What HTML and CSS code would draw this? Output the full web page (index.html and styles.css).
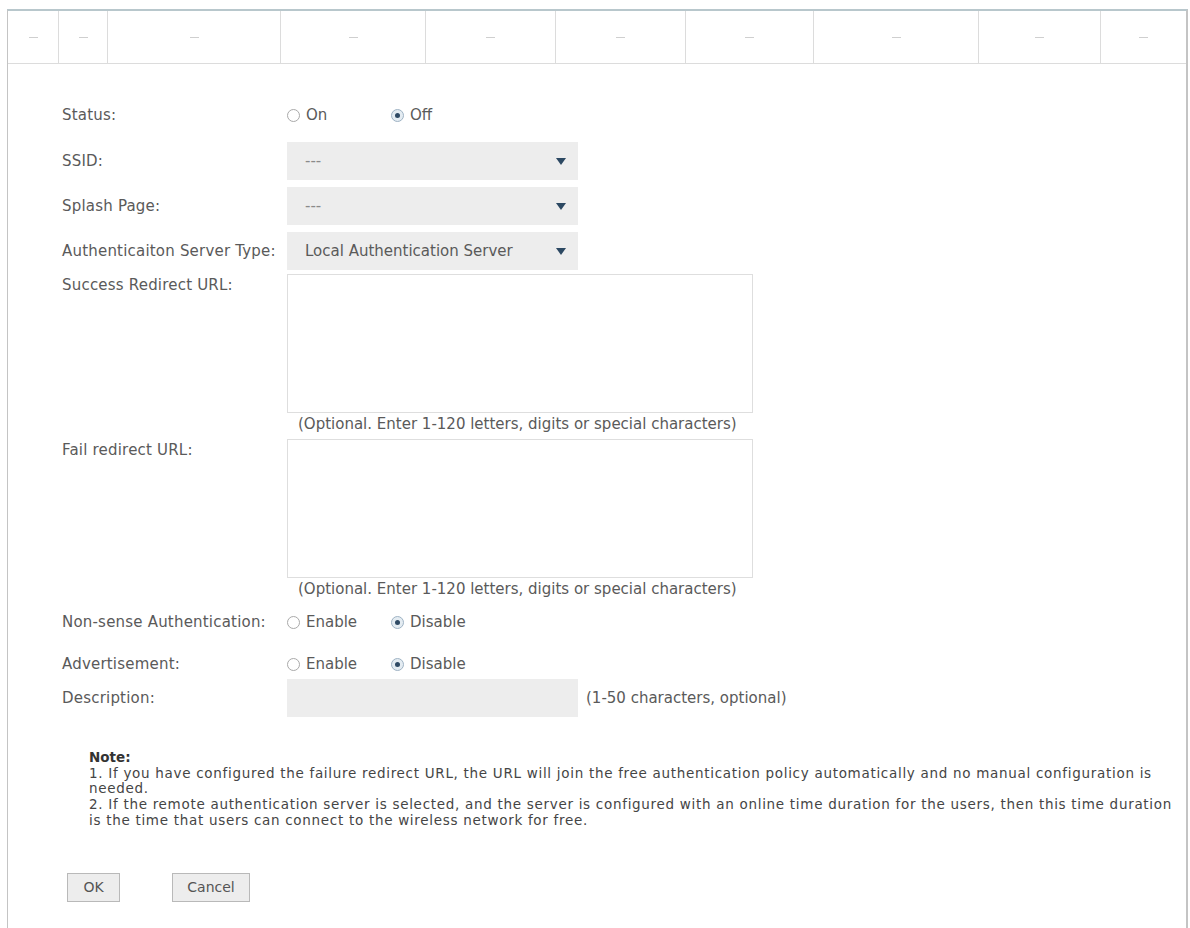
FILE: index.html
```html
<!DOCTYPE html>
<html lang="en">
<head>
  <meta charset="UTF-8">
  <title>Portal Authentication</title>
  <link rel="stylesheet" href="styles.css">
</head>
<body>
  <div class="frame">
    <div class="grid-head">
      <div class="head-cell c1"><span class="dash"></span></div>
      <div class="head-cell c2"><span class="dash"></span></div>
      <div class="head-cell c3"><span class="dash"></span></div>
      <div class="head-cell c4"><span class="dash"></span></div>
      <div class="head-cell c5"><span class="dash"></span></div>
      <div class="head-cell c6"><span class="dash"></span></div>
      <div class="head-cell c7"><span class="dash"></span></div>
      <div class="head-cell c8"><span class="dash"></span></div>
      <div class="head-cell c9"><span class="dash"></span></div>
      <div class="head-cell c10"><span class="dash"></span></div>
    </div>

    <form class="form">
      <div class="row row-radio first">
        <div class="lbl">Status:</div>
        <div class="options">
          <span class="opt"><span class="radio"></span>On</span>
          <span class="opt"><span class="radio checked"></span>Off</span>
        </div>
      </div>

      <div class="row row-select ssid">
        <div class="lbl">SSID:</div>
        <div class="select"><span class="sel-text muted">---</span><span class="arrow"></span></div>
      </div>

      <div class="row row-select">
        <div class="lbl">Splash Page:</div>
        <div class="select"><span class="sel-text muted">---</span><span class="arrow"></span></div>
      </div>

      <div class="row row-select">
        <div class="lbl">Authenticaiton Server Type:</div>
        <div class="select"><span class="sel-text">Local Authentication Server</span><span class="arrow"></span></div>
      </div>

      <div class="row row-area">
        <div class="lbl top">Success Redirect URL:</div>
        <div class="area-wrap">
          <div class="textarea"></div>
          <div class="hint">(Optional. Enter 1-120 letters, digits or special characters)</div>
        </div>
      </div>

      <div class="row row-area">
        <div class="lbl top">Fail redirect URL:</div>
        <div class="area-wrap">
          <div class="textarea"></div>
          <div class="hint">(Optional. Enter 1-120 letters, digits or special characters)</div>
        </div>
      </div>

      <div class="row row-radio nonsense">
        <div class="lbl">Non-sense Authentication:</div>
        <div class="options">
          <span class="opt"><span class="radio"></span>Enable</span>
          <span class="opt"><span class="radio checked"></span>Disable</span>
        </div>
      </div>

      <div class="row row-radio">
        <div class="lbl">Advertisement:</div>
        <div class="options">
          <span class="opt"><span class="radio"></span>Enable</span>
          <span class="opt"><span class="radio checked"></span>Disable</span>
        </div>
      </div>

      <div class="row row-select tight">
        <div class="lbl">Description:</div>
        <div class="input"></div>
        <div class="after">(1-50 characters, optional)</div>
      </div>

      <div class="note">
        <div class="note-title">Note:</div>
        <div>1. If you have configured the failure redirect URL, the URL will join the free authentication policy automatically and no manual configuration is needed.</div>
        <div>2. If the remote authentication server is selected, and the server is configured with an online time duration for the users, then this time duration is the time that users can connect to the wireless network for free.</div>
      </div>

      <div class="buttons">
        <button type="button" class="btn ok">OK</button>
        <button type="button" class="btn cancel">Cancel</button>
      </div>
    </form>
  </div>
</body>
</html>
```

FILE: styles.css
```css
    body {
      margin: 0;
      background: #fff;
      font-family: "DejaVu Sans", Verdana, sans-serif;
      font-size: 15px;
      color: #5a5a5a;
      overflow: hidden;
    }

    .frame {
      margin: 9px 0 0 7px;
      width: 1178px;
      height: 940px;
      border-top: 2px solid #b8c7cc;
      border-left: 1px solid #c4c4c4;
      border-right: 2px solid #c4c4c4;
    }

    .grid-head {
      display: flex;
      height: 52px;
      border-bottom: 1px solid #dcdcdc;
    }

    .head-cell {
      display: flex;
      align-items: center;
      justify-content: center;
      border-right: 1px solid #dcdcdc;
    }

    .head-cell:last-child {
      border-right: none;
    }

    .c1 { width: 50px; }
    .c2 { width: 48px; }
    .c3 { width: 172px; }
    .c4 { width: 144px; }
    .c5 { width: 129px; }
    .c6 { width: 129px; }
    .c7 { width: 127px; }
    .c8 { width: 164px; }
    .c9 { width: 121px; }
    .c10 { flex: 1; }

    .dash {
      width: 9px;
      height: 1px;
      background: #cfcfcf;
    }

    .form {
      padding: 32px 0 0 54px;
    }

    .row {
      display: flex;
      align-items: center;
      height: 38px;
    }

    .row-select {
      margin-top: 7px;
    }

    .row-select.ssid {
      margin-top: 13px;
    }

    .row-select.tight {
      margin-top: 1px;
    }

    .row-radio {
      height: 28px;
      margin-top: 14px;
    }

    .row-radio.first {
      margin-top: 5px;
    }

    .row-radio.nonsense {
      margin-top: 8px;
    }

    .row-area {
      height: auto;
      align-items: flex-start;
      margin-top: 4px;
    }

    .lbl {
      width: 225px;
      flex-shrink: 0;
      letter-spacing: 0.2px;
    }

    .lbl.top {
      padding-top: 1px;
      line-height: 20px;
    }

    .options {
      display: flex;
    }

    .opt {
      display: flex;
      align-items: center;
      width: 104px;
    }

    .radio {
      width: 11px;
      height: 11px;
      border: 1px solid #a9a9a9;
      border-radius: 50%;
      margin-right: 6px;
      background: #fff;
      position: relative;
    }

    .radio.checked {
      border-color: #9fb3c4;
      background: #e4ecf2;
    }

    .radio.checked::after {
      content: "";
      position: absolute;
      left: 3px;
      top: 3px;
      width: 5px;
      height: 5px;
      border-radius: 50%;
      background: #2f4a64;
    }

    .select {
      width: 291px;
      height: 38px;
      background: #ededed;
      display: flex;
      align-items: center;
      justify-content: space-between;
      padding: 0 12px 0 18px;
      box-sizing: border-box;
    }

    .sel-text.muted {
      color: #8a8a8a;
    }

    .arrow {
      width: 0;
      height: 0;
      border-left: 5px solid transparent;
      border-right: 5px solid transparent;
      border-top: 7px solid #2c4862;
    }

    .area-wrap {
      width: 466px;
    }

    .textarea {
      height: 137px;
      border: 1px solid #dedede;
      background: #fff;
    }

    .hint {
      line-height: 22px;
      padding-left: 11px;
      white-space: nowrap;
    }

    .input {
      width: 291px;
      height: 38px;
      background: #ededed;
    }

    .after {
      margin-left: 8px;
    }

    .note {
      margin: 33px 0 0 27px;
      width: 1096px;
      font-size: 13.5px;
      letter-spacing: 0.7px;
      line-height: 15.7px;
      color: #454545;
    }

    .note-title {
      font-weight: bold;
      letter-spacing: 0;
      color: #333;
    }

    .buttons {
      display: flex;
      gap: 52px;
      margin: 44px 0 0 5px;
    }

    .btn {
      height: 29px;
      font-family: "DejaVu Sans", Verdana, sans-serif;
      font-size: 14px;
      color: #555;
      background: #ededed;
      border: 1px solid #b9b9b9;
      padding: 0;
      cursor: pointer;
    }

    .ok { width: 53px; }
    .cancel { width: 78px; }
```
